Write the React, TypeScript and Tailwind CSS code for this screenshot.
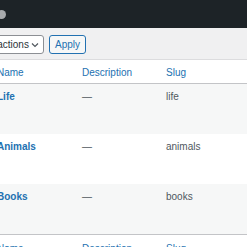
const rows = [
  { name: "Life", slug: "life" },
  { name: "Animals", slug: "animals" },
  { name: "Books", slug: "books" },
];

function HeaderCells() {
  return (
    <>
      <span>Name</span>
      <span>Description</span>
      <span>Slug</span>
    </>
  );
}

export default function App() {
  return (
    <div
      className="w-[247px] h-[247px] overflow-hidden bg-[#f0f0f1] text-[10px]"
      style={{ fontFamily: '"Liberation Sans", Arial, sans-serif' }}
    >
      <div className="h-[28px] bg-[#1d2327] flex items-center">
        <div className="-ml-[3px] w-[9px] h-[9px] rounded-full bg-[#a7aaad]" />
      </div>

      <div className="flex items-center pt-[7px]">
        <div className="-ml-[30px] w-[74px] h-[19px] shrink-0 flex items-center justify-between pl-[4px] pr-[4px] bg-white border border-[#8c8f94] rounded-[3px] text-[#2c3338]">
          <span className="whitespace-nowrap">Bulk actions</span>
          <svg width="8" height="8" viewBox="0 0 8 8" fill="none" className="shrink-0">
            <path d="M1 2.5 L4 5.5 L7 2.5" stroke="#50575e" strokeWidth="1.2" />
          </svg>
        </div>
        <button className="ml-[5px] w-[37px] h-[19px] flex items-center justify-center rounded-[3px] border border-[#2271b1] bg-[#f6f7f7] text-[#2271b1]">
          Apply
        </button>
      </div>

      <div className="mt-[5px] bg-white border-t border-[#dcdcde]">
        <div className="-ml-[3px] grid grid-cols-[85px_84px_1fr] h-[24px] pt-[5px] leading-[15px] text-[#2271b1] border-b border-[#c3c4c7]">
          <HeaderCells />
        </div>
        {rows.map((r, i) => (
          <div
            key={r.slug}
            className={`-ml-[3px] grid grid-cols-[85px_84px_1fr] h-[50px] pt-[5px] leading-[15px] ${
              i % 2 === 0 ? "bg-[#f6f7f7]" : "bg-white"
            }`}
          >
            <span className="font-bold text-[#2271b1]">{r.name}</span>
            <span className="text-[#50575e]">—</span>
            <span className="text-[#50575e]">{r.slug}</span>
          </div>
        ))}
        <div className="-ml-[3px] grid grid-cols-[85px_84px_1fr] h-[30px] pt-[6px] leading-[15px] text-[#2271b1] border-t border-[#c3c4c7]">
          <HeaderCells />
        </div>
      </div>
    </div>
  );
}
